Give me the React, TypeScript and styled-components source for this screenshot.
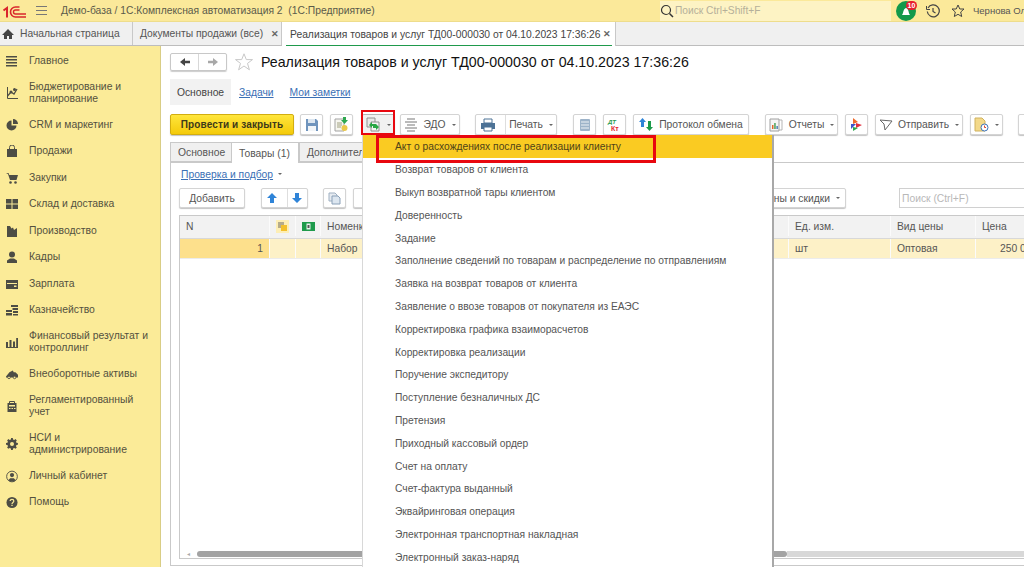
import { ReactNode } from "react"
import styled, { createGlobalStyle } from "styled-components"

const GlobalStyle = createGlobalStyle`
    html, body {
        margin: 0;
        padding: 0;
        background: #fff;
        overflow: hidden;
    }
    * { box-sizing: border-box; }
`

const Page = styled.div`
    position: relative;
    width: 1024px;
    height: 567px;
    overflow: hidden;
    display: flex;
    flex-direction: column;
    font-family: "Liberation Sans", Arial, sans-serif;
    font-size: 10.3px;
    color: #4b4b4b;
`

/* top bar */
const TitleBar = styled.div`
    height: 22px;
    flex: none;
    display: flex;
    align-items: center;
    background: #fbe99a;
    border-bottom: 1px solid #eedd8c;
`

const Logo = styled.div`
    width: 30px;
    height: 18px;
    flex: none;
    display: flex;
`

const Burger = styled.div`
    width: 11px;
    height: 9px;
    margin-left: 6px;
    border-top: 1px solid #777;
    border-bottom: 1px solid #777;
    position: relative;
    &::after {
        content: "";
        position: absolute;
        left: 0;
        right: 0;
        top: 3px;
        height: 1px;
        background: #777;
    }
`

const AppTitle = styled.div`
    margin-left: 14px;
    flex: 1;
    color: #5a5a4a;
    white-space: pre;
`

const GlobalSearch = styled.div`
    width: 231px;
    height: 20px;
    background: #fdf3c4;
    display: flex;
    align-items: center;
    color: #b5b09a;
    font-size: 10.2px;
    gap: 1px;
    padding-left: 0;
`

const BellWrap = styled.div`
    position: relative;
    width: 20px;
    height: 20px;
    margin-left: 5px;
`

const BellBadge = styled.div`
    position: absolute;
    top: 0;
    right: -1px;
    width: 11px;
    height: 9px;
    border-radius: 5px;
    background: #e8212c;
    color: #fff;
    font-size: 7px;
    font-weight: bold;
    line-height: 9px;
    text-align: center;
`

const TopIcon = styled.div<{ $gap: number }>`
    width: 14px;
    height: 14px;
    display: flex;
    margin-left: ${props => props.$gap}px;
`

const UserName = styled.div`
    margin-left: 8px;
    font-size: 9.5px;
    color: #555;
    white-space: nowrap;
    width: 51px;
    overflow: hidden;
`

/* open windows */
const TabBar = styled.div`
    height: 24px;
    flex: none;
    display: flex;
    background: #f0f0f0;
    border-bottom: 1px solid #bdbdbd;
`

const HomeTab = styled.div`
    width: 133px;
    display: flex;
    align-items: center;
    gap: 6px;
    padding-left: 2px;
    border-right: 1px solid #c8c8c8;
    color: #555;
    white-space: nowrap;
`

const OpenTab = styled.div`
    width: 149px;
    display: flex;
    align-items: center;
    padding-left: 7px;
    gap: 8px;
    border-right: 1px solid #c8c8c8;
    color: #555;
    white-space: nowrap;
`

const ActiveOpenTab = styled.div`
    width: 334px;
    height: 24px;
    background: #fff;
    display: flex;
    align-items: center;
    justify-content: space-between;
    padding: 0 4px 0 8px;
    border-right: 1px solid #c8c8c8;
    color: #444;
    position: relative;
    white-space: nowrap;
    &::after {
        content: "";
        position: absolute;
        left: 4px;
        right: 3px;
        bottom: 0;
        height: 1px;
        background: #1f9a4c;
    }
`

const CloseMark = styled.span`
    font-size: 9px;
    font-weight: bold;
    color: #666;
`

const Body = styled.div`
    flex: 1;
    display: flex;
    min-height: 0;
`

/* sections panel */
const Sidebar = styled.div`
    width: 161px;
    flex: none;
    background: #fbeb98;
    border-right: 1px solid #d9cd85;
    padding-top: 1.6px;
`

const SideItem = styled.div<{ $tall?: boolean }>`
    display: flex;
    align-items: center;
    min-height: ${props => props.$tall ? "37.5px" : "26.5px"};
    padding-left: 6px;
    gap: 11px;
    color: #54513f;
    line-height: 12px;
    font-size: 10.4px;
`

const SideIcon = styled.div`
    width: 12px;
    height: 12px;
    flex: none;
    display: flex;
`

/* form */
const Form = styled.div`
    flex: 1;
    min-width: 0;
    padding: 6px 0 0 9px;
    display: flex;
    flex-direction: column;
    background: #fff;
`

const HeadRow = styled.div`
    display: flex;
    align-items: center;
    height: 20px;
`

const NavGroup = styled.div`
    width: 57px;
    height: 18px;
    display: flex;
    border: 1px solid #c8c8c8;
    border-radius: 2px;
    box-shadow: 0 1px 1px #ccc;
`

const NavCell = styled.div`
    flex: 1;
    display: flex;
    align-items: center;
    justify-content: center;
    & + & { border-left: 1px solid #d8d8d8; }
`

const StarWrap = styled.div`
    width: 18px;
    height: 18px;
    margin: 0 8px;
    display: flex;
`

const Title = styled.div`
    font-size: 14.2px;
    color: #111;
    white-space: nowrap;
`

const FormTabs = styled.div`
    display: flex;
    align-items: center;
    margin-top: 7px;
    height: 26px;
`

const FormTabActive = styled.div`
    width: 61px;
    height: 26px;
    background: #f2f2f2;
    display: flex;
    align-items: center;
    justify-content: center;
    color: #444;
    margin-right: 8px;
`

const LinkText = styled.span`
    color: #3a6fb5;
    text-decoration: underline;
    margin-right: 16px;
`

const Toolbar = styled.div`
    display: flex;
    align-items: center;
    height: 21px;
    margin-top: 9px;
    white-space: nowrap;
`

const Btn = styled.div<{ $w: number; $mr?: number }>`
    width: ${props => props.$w}px;
    margin-right: ${props => props.$mr ?? 7}px;
    flex: none;
    height: 21px;
    display: flex;
    align-items: center;
    justify-content: center;
    gap: 5px;
    background: #fff;
    border: 1px solid #d4d4d4;
    border-radius: 2px;
    box-shadow: 0 1px 1px #c4c4c4;
    color: #555;
`

const PressedBtn = styled(Btn)`
    background: #f1f1f1;
    border-top-color: #b4b4b4;
`

const PrimaryBtn = styled(Btn)`
    background: linear-gradient(#ffe63c, #f4ca0a);
    border-color: #d2ad10;
    color: #3d3a1a;
    font-weight: bold;
    font-size: 10px;
    letter-spacing: 0.12px;
`

const SplitCell = styled.div<{ $w?: number }>`
    height: 100%;
    display: flex;
    align-items: center;
    justify-content: center;
    gap: 5px;
    ${props => props.$w ? `width: ${props.$w}px;` : "flex: 1;"}
    & + & { border-left: 1px solid #dedede; }
`

const Caret = styled.span`
    width: 0;
    height: 0;
    border-left: 2px solid transparent;
    border-right: 2px solid transparent;
    border-top: 2px solid #666;
    margin-left: 1px;
`

const Panel = styled.div`
    margin-top: 7px;
    flex: 1;
    min-height: 0;
    display: flex;
    flex-direction: column;
`

const TabStrip = styled.div`
    display: flex;
    height: 21px;
    flex: none;
    border-bottom: 1px solid #c9c9c9;
`

const PageTab = styled.div<{ $w: number; $active?: boolean }>`
    width: ${props => props.$w}px;
    height: ${props => props.$active ? "21px" : "20px"};
    display: flex;
    align-items: center;
    padding-left: 7px;
    background: ${props => props.$active ? "#fff" : "#f0f0f0"};
    border: 1px solid #c9c9c9;
    border-bottom: ${props => props.$active ? "none" : "1px solid #c9c9c9"};
    border-left-width: ${props => props.$active ? "0" : "1px"};
    color: #555;
    white-space: nowrap;
`

const PanelBody = styled.div`
    flex: 1;
    min-height: 0;
    margin-bottom: 1px;
    border-left: 1px solid #c9c9c9;
    border-bottom: 1px solid #c9c9c9;
    padding: 0 0 6px 8px;
    display: flex;
    flex-direction: column;
`

const CheckRow = styled.div`
    height: 22px;
    display: flex;
    align-items: center;
    gap: 4px;
    padding-left: 2px;
    flex: none;
`

const CheckLink = styled.span`
    color: #3a6fb5;
    text-decoration: underline;
`

const TableBar = styled.div`
    display: flex;
    align-items: center;
    height: 20px;
    flex: none;
    margin-top: 3px;
`

const SmallBtn = styled(Btn)`
    height: 20px;
`

const PriceBtn = styled(SmallBtn)`
    justify-content: flex-end;
    padding-right: 5px;
`

const SearchBox = styled.div`
    width: 125px;
    height: 20px;
    margin-left: 53px;
    flex: none;
    border: 1px solid #d0d0d0;
    border-right: none;
    color: #b8b8b8;
    display: flex;
    align-items: center;
    padding-left: 2px;
`

const GridBox = styled.div`
    margin-top: 7px;
    flex: 1;
    min-height: 0;
    border: 1px solid #c9c9c9;
    border-right: none;
    display: flex;
    flex-direction: column;
`

const GridRow = styled.div<{ $h: number; $head?: boolean }>`
    height: ${props => props.$h}px;
    flex: none;
    display: flex;
    padding-bottom: ${props => props.$head ? "2px" : "0"};
    background: ${props => props.$head ? "#f2f2f2" : "#fdf1c7"};
    border-bottom: 1px solid ${props => props.$head ? "#d8d8d8" : "#ececec"};
`

const GridCell = styled.div<{ $w: number; $right?: boolean; $accent?: boolean }>`
    width: ${props => props.$w}px;
    flex: none;
    display: flex;
    align-items: center;
    justify-content: ${props => props.$right ? "flex-end" : "flex-start"};
    padding: 0 6px;
    border-right: 1px solid #fbfbfb;
    background: ${props => props.$accent ? "#fde08c" : "transparent"};
    color: #555;
    white-space: nowrap;
`

const IconCell = styled(GridCell)`
    justify-content: center;
    padding: 0;
`

const PriceCell = styled(GridCell)`
    padding-left: 24px;
    overflow: hidden;
`

const GridFill = styled.div`
    flex: 1;
`

const ScrollRow = styled.div`
    height: 7px;
    flex: none;
    display: flex;
    align-items: center;
    margin-bottom: 1px;
    padding-left: 7px;
`

const ScrollArrow = styled.span`
    width: 10px;
    color: #aaa;
    font-size: 6px;
`

const ScrollThumb = styled.div`
    width: 590px;
    height: 6px;
    flex: none;
    background: #a3a3a3;
    border-radius: 3px;
`

const ScrollTrack = styled.div`
    flex: 1;
    height: 6px;
    background: #d8d8d8;
`

/* popup menu and annotation */
const Menu = styled.div`
    position: absolute;
    left: 362px;
    top: 135px;
    width: 412px;
    height: 432px;
    background: #fff;
    border-left: 1px solid #d8d8d8;
    border-right: 2px solid #a8a8a8;
`

const MenuItem = styled.div<{ $active?: boolean }>`
    height: 22.8px;
    display: flex;
    align-items: center;
    padding: 1px 0 0 32px;
    background: ${props => props.$active ? "#facb22" : "transparent"};
    color: ${props => props.$active ? "#4f4318" : "#555"};
    white-space: nowrap;
    font-size: 10.25px;
`

const RedFrame = styled.div<{ $x: number; $y: number; $w: number; $h: number; $t: number }>`
    position: absolute;
    left: ${props => props.$x}px;
    top: ${props => props.$y}px;
    width: ${props => props.$w}px;
    height: ${props => props.$h}px;
    border: ${props => props.$t}px solid #e8070f;
    pointer-events: none;
`

/* drawings */
const Svg = ({ size = 12, w, h, children }: { size?: number, w?: number, h?: number, children: ReactNode }) =>
    <svg width={w ?? size} height={h ?? size} viewBox={`0 0 ${w ?? size} ${h ?? size}`}>{children}</svg>

const ic = "#4d4d45"

const sideIcons: Record<string, ReactNode> = {
    main: <Svg><path d="M0 1h11v1.6H0zM0 4h11v1.6H0zM0 7h11v1.6H0zM0 10h11v1.6H0z" fill={ic} /></Svg>,
    budget: <Svg><path d="M1.500 0v11.500H12" fill="none" stroke={ic} /><path d="M1.500 9 5 5l3 2 3-5" fill="none" stroke={ic} strokeWidth="1.300" /><circle cx="5" cy="5" r="1.500" fill={ic} /><circle cx="8.500" cy="2.500" r="1.500" fill={ic} /></Svg>,
    crm: <Svg><path d="M5.500 1.500a5 5 0 1 0 5 5h-5z" fill={ic} /><path d="M7 0a5 5 0 0 1 5 5H7z" fill={ic} /></Svg>,
    sales: <Svg><path d="M1 4h10v8H1z" fill={ic} /><path d="M3.500 4V2.500a2.500 2.500 0 0 1 5 0V4" fill="none" stroke={ic} /></Svg>,
    buy: <Svg><path d="M0 1h2.500l.8 2H12l-1.500 5H4L2 2" fill={ic} /><circle cx="4.500" cy="10.500" r="1.300" fill={ic} /><circle cx="9.500" cy="10.500" r="1.300" fill={ic} /></Svg>,
    store: <Svg><path d="M0 1h5.500v4.500H0zM6.500 1H12v4.500H6.500zM0 6.500h5.500V11H0zM6.500 6.500H12V11H6.500z" fill={ic} /></Svg>,
    prod: <Svg><path d="M1 1h3l1.500 2.500L7 2.500 8 5l3-2v9H1z" fill={ic} /></Svg>,
    staff: <Svg><circle cx="6" cy="3.500" r="3" fill={ic} /><path d="M1 12V9.500L4 7.500h4l3 2V12z" fill={ic} /></Svg>,
    salary: <Svg><path d="M0 2h12v9H0z" fill={ic} /><path d="M1 5h10v1H1zM8 7.500h2.500v1.500H8z" fill="#fbeb98" /></Svg>,
    treasury: <Svg><path d="M0 6h6v2H0zM0 9h6v2.500H0zM5 1h7v2H5zM6.500 4H12v2H6.500zM7 7h5v2H7zM7 10h5v1.500H7z" fill={ic} /></Svg>,
    finance: <Svg><path d="M0 6h2v5H0zM3.500 4H5.500v7H3.500zM7 5.500h2V11H7zM10.200 2h1.800v9h-1.800z" fill={ic} /><path d="M0 11h12v1H0z" fill={ic} /></Svg>,
    assets: <Svg w={14} h={12}><path d="M0 9 4 4l4-2 1 2h2l3 3v3H0z" fill={ic} /><circle cx="3.500" cy="10" r="1.500" fill="#fbeb98" stroke={ic} /><circle cx="10" cy="10" r="1.500" fill="#fbeb98" stroke={ic} /></Svg>,
    reg: <Svg><path d="M1.500 3h9v9h-9z" fill={ic} /><path d="M3.500 3V1.500h5V3" fill="none" stroke={ic} /><path d="M3 5h6v1.500H3zM3 8h1.500v1H3zM5.500 8H7v1H5.500zM8 8h1.500v1H8z" fill="#fbeb98" /></Svg>,
    nsi: <Svg><path d="M5 0h2l.3 1.700 1.400.6L10.200 1.300 11.700 2.800 10.700 4.300l.6 1.400L13 6v2l-1.700.3-.6 1.400 1 1.500-1.500 1.500-1.500-1-1.400.6L7 14H5l-.3-1.700-1.400-.6-1.500 1L.3 11.200l1-1.500-.6-1.400L-1 8V6l1.700-.3.6-1.400-1-1.500L1.800 1.300l1.500 1 1.400-.6z" transform="scale(.85) translate(1 0)" fill={ic} /><circle cx="6" cy="6" r="2" fill="#fbeb98" /></Svg>,
    cabinet: <Svg w={13} h={13}><circle cx="6.500" cy="6.500" r="5.800" fill="none" stroke={ic} /><circle cx="6.500" cy="5" r="2.300" fill={ic} /><path d="M2.500 10.500 4.500 8.500h4l2 2-2 1.500h-4z" fill={ic} /></Svg>,
    help: <Svg w={13} h={13}><circle cx="6.500" cy="6.500" r="6" fill={ic} /><path d="M4.500 5c0-2.500 4-2.500 4 0 0 1.500-2 1.500-2 3" fill="none" stroke="#fbeb98" strokeWidth="1.300" /><path d="M5.800 9h1.400v1.400H5.800z" fill="#fbeb98" /></Svg>,
}

const sections: { icon: string, label: ReactNode, tall?: boolean }[] = [
    { icon: "main", label: "Главное" },
    { icon: "budget", label: <>Бюджетирование и<br />планирование</>, tall: true },
    { icon: "crm", label: "CRM и маркетинг" },
    { icon: "sales", label: "Продажи" },
    { icon: "buy", label: "Закупки" },
    { icon: "store", label: "Склад и доставка" },
    { icon: "prod", label: "Производство" },
    { icon: "staff", label: "Кадры" },
    { icon: "salary", label: "Зарплата" },
    { icon: "treasury", label: "Казначейство" },
    { icon: "finance", label: <>Финансовый результат и<br />контроллинг</>, tall: true },
    { icon: "assets", label: "Внеоборотные активы" },
    { icon: "reg", label: <>Регламентированный<br />учет</>, tall: true },
    { icon: "nsi", label: <>НСИ и<br />администрирование</>, tall: true },
    { icon: "cabinet", label: "Личный кабинет" },
    { icon: "help", label: "Помощь" },
]

const menuItems = [
    "Акт о расхождениях после реализации клиенту",
    "Возврат товаров от клиента",
    "Выкуп возвратной тары клиентом",
    "Доверенность",
    "Задание",
    "Заполнение сведений по товарам и распределение по отправлениям",
    "Заявка на возврат товаров от клиента",
    "Заявление о ввозе товаров от покупателя из ЕАЭС",
    "Корректировка графика взаиморасчетов",
    "Корректировка реализации",
    "Поручение экспедитору",
    "Поступление безналичных ДС",
    "Претензия",
    "Приходный кассовый ордер",
    "Счет на оплату",
    "Счет-фактура выданный",
    "Эквайринговая операция",
    "Электронная транспортная накладная",
    "Электронный заказ-наряд",
]

const GreenArrows = () =>
    <Svg size={15}>
        <path d="M1 1h8v9H1z" fill="#e8e8e8" stroke="#909090" />
        <path d="M5 5h8v9H5z" fill="#f3f3f3" stroke="#909090" />
        <path d="M3 8l3-3v2h4v2H6v2zM13 10l-3 3v-2H7V9h3V7z" fill="#28a745" />
    </Svg>

const App = () => {
    return (
        <Page>
            <GlobalStyle />
            <TitleBar>
                <Logo>
                    <svg width="30" height="18" viewBox="0 0 30 18" role="img" aria-label="1С">
                        <path d="M3.500 8.500 7 6v9.500" fill="none" stroke="#d9262c" strokeWidth="2" />
                        <path d="M26 15H15.500a5 5 0 0 1 0-10h4" fill="none" stroke="#d9262c" strokeWidth="1.600" />
                        <path d="M26 12H15.500a2 2 0 0 1 0-4h4" fill="none" stroke="#d9262c" strokeWidth="1.400" />
                    </svg>
                </Logo>
                <Burger />
                <AppTitle>Демо-база / 1С:Комплексная автоматизация 2  (1С:Предприятие)</AppTitle>
                <GlobalSearch>
                    <Svg size={14}>
                        <circle cx="6" cy="6" r="4.500" fill="none" stroke="#333" strokeWidth="1.200" />
                        <path d="M9.500 9.500 13 13" stroke="#333" strokeWidth="1.500" />
                    </Svg>
                    Поиск Ctrl+Shift+F
                </GlobalSearch>
                <BellWrap>
                    <Svg size={20}>
                        <circle cx="10" cy="10" r="10" fill="#12994a" />
                        <path d="M6 14c1.500-1.500 1-6 4-7 3 1 2.500 5.500 4 7z" fill="#fff" />
                    </Svg>
                    <BellBadge>10</BellBadge>
                </BellWrap>
                <TopIcon $gap={10}>
                    <Svg size={14}>
                        <path d="M2 4a6 6 0 1 1-.7 3.500" fill="none" stroke="#444" strokeWidth="1.200" />
                        <path d="M.5 2v3.500H4" fill="none" stroke="#444" />
                        <path d="M7 4v3.500l2.500 1.500" fill="none" stroke="#444" strokeWidth="1.200" />
                    </Svg>
                </TopIcon>
                <TopIcon $gap={11}>
                    <Svg size={14}>
                        <path d="M7 1l1.800 4H13l-3.300 3 1 4.500L7 10.300 3.300 12.500l1-4.500L1 5h4.200z" fill="none" stroke="#444" />
                    </Svg>
                </TopIcon>
                <UserName>Чернова Ольга</UserName>
            </TitleBar>
            <TabBar>
                <HomeTab>
                    <Svg size={12}>
                        <path d="M6 1 0 7h2v4h3V8h2v3h3V7h2z" fill="#444" />
                    </Svg>
                    <span>Начальная страница</span>
                </HomeTab>
                <OpenTab>
                    <span>Документы продажи (все)</span>
                    <CloseMark>✕</CloseMark>
                </OpenTab>
                <ActiveOpenTab>
                    <span>Реализация товаров и услуг ТД00-000030 от 04.10.2023 17:36:26</span>
                    <CloseMark>✕</CloseMark>
                </ActiveOpenTab>
            </TabBar>
            <Body>
                <Sidebar>
                    {sections.map(s =>
                        <SideItem key={s.icon} $tall={s.tall}>
                            <SideIcon>{sideIcons[s.icon]}</SideIcon>
                            <span>{s.label}</span>
                        </SideItem>
                    )}
                </Sidebar>
                <Form>
                    <HeadRow>
                        <NavGroup>
                            <NavCell>
                                <Svg size={12}><path d="M1 6l5-4v2.800h5v2.400H6V10z" fill="#444" /></Svg>
                            </NavCell>
                            <NavCell>
                                <Svg size={12}><path d="M11 6 6 2v2.800H1v2.400h5V10z" fill="#a8a8a8" /></Svg>
                            </NavCell>
                        </NavGroup>
                        <StarWrap>
                            <Svg size={18}>
                                <path d="M9 .8l2.300 5.800h6.200l-5 3.800 1.900 6.400-5.400-3.800-5.400 3.800 1.900-6.400-5-3.800h6.200z" fill="none" stroke="#c8c8c8" />
                            </Svg>
                        </StarWrap>
                        <Title>Реализация товаров и услуг ТД00-000030 от 04.10.2023 17:36:26</Title>
                    </HeadRow>
                    <FormTabs>
                        <FormTabActive>Основное</FormTabActive>
                        <LinkText>Задачи</LinkText>
                        <LinkText>Мои заметки</LinkText>
                    </FormTabs>
                    <Toolbar>
                        <PrimaryBtn $w={124} $mr={6}>Провести и закрыть</PrimaryBtn>
                        <Btn $w={23}>
                            <Svg size={14}>
                                <path d="M1 1h10l2 2v10H1z" fill="#6f94bd" />
                                <path d="M3 1h7v4H3z" fill="#dce6f0" />
                                <path d="M3 8h8v5H3z" fill="#f2f5f8" />
                            </Svg>
                        </Btn>
                        <Btn $w={23} $mr={9}>
                            <Svg size={15}>
                                <path d="M1 2h9v12H1z" fill="#f6f6f0" stroke="#a3a3a3" />
                                <path d="M3 6h5M3 8h5M3 10h4" stroke="#a0a080" />
                                <path d="M7 3h2V0h3v3h2l-3.500 4z" fill="#2ea84f" />
                                <circle cx="10.500" cy="11" r="3" fill="#ecc94a" />
                            </Svg>
                        </Btn>
                        <PressedBtn $w={33} $mr={5}>
                            <GreenArrows />
                            <Caret />
                        </PressedBtn>
                        <Btn $w={60} $mr={15}>
                            <Svg size={14}>
                                <path d="M3 1h8M1 4h12M3 7h8M1 10h12M3 13h8" stroke="#a5a5a5" strokeWidth="1.500" />
                            </Svg>
                            ЭДО
                            <Caret />
                        </Btn>
                        <Btn $w={82} $mr={16}>
                            <SplitCell $w={24}>
                                <Svg size={14}>
                                    <path d="M3 1h8v4H3z" fill="#fff" stroke="#4d7296" />
                                    <path d="M0 5h14v6H0z" fill="#4d7296" />
                                    <path d="M3 9h8v4H3z" fill="#fff" stroke="#4d7296" />
                                </Svg>
                            </SplitCell>
                            <SplitCell>Печать<Caret /></SplitCell>
                        </Btn>
                        <Btn $w={23}>
                            <Svg size={14}>
                                <rect x="2" y="1" width="10" height="12" rx="1" fill="#9db3c9" />
                                <path d="M3 4h8M3 7h8M3 10h8" stroke="#eef2f6" />
                            </Svg>
                        </Btn>
                        <Btn $w={23}>
                            <Svg w={15} h={14}>
                                <text x="1" y="6" fontSize="6" fontWeight="bold" fontStyle="italic" fill="#2a9a4d">ДТ</text>
                                <text x="4" y="13" fontSize="7" fontWeight="bold" fill="#e2262c">Кт</text>
                            </Svg>
                        </Btn>
                        <Btn $w={116} $mr={16}>
                            <Svg size={15}>
                                <path d="M3.500 1 7 5H5v5H2V5H0z" fill="#2f84d8" />
                                <path d="M10.500 14 7 10h2V4h3v6h2z" fill="#1c9a4a" />
                            </Svg>
                            Протокол обмена
                        </Btn>
                        <Btn $w={73}>
                            <Svg size={15}>
                                <path d="M1 2h9v12H1z" fill="#f4f4f4" stroke="#a0a0a0" />
                                <path d="M10 3h3v10h-3" fill="none" stroke="#b5b5b5" />
                                <path d="M3 8h1.500v4H3z" fill="#e2662c" />
                                <path d="M5.200 6h1.500v6H5.200z" fill="#4aa35a" />
                                <path d="M7.400 9h1.500v3H7.400z" fill="#4d7fb8" />
                            </Svg>
                            Отчеты
                            <Caret />
                        </Btn>
                        <Btn $w={23}>
                            <Svg size={13}>
                                <path d="M3 0l5 4-5 2z" fill="#ef6a2a" />
                                <path d="M1 6h5l-5 5z" fill="#3f55c8" />
                                <path d="M6 5l6 2-6 3z" fill="#e2303f" />
                                <path d="M3 9l5 1-5 3z" fill="#2ea84f" />
                            </Svg>
                        </Btn>
                        <Btn $w={88}>
                            <Svg size={14}>
                                <path d="M1 2l12 1-7 9-1-6z" fill="none" stroke="#666" />
                            </Svg>
                            Отправить
                            <Caret />
                        </Btn>
                        <Btn $w={33} $mr={15}>
                            <Svg size={15}>
                                <path d="M1 1h7l3 3v10H1z" fill="#f3d98a" stroke="#d0b25e" />
                                <circle cx="10.500" cy="10.500" r="3.500" fill="#fff" stroke="#3f74b8" />
                                <path d="M10.500 8.500v2h1.500" stroke="#d9442f" fill="none" />
                            </Svg>
                            <Caret />
                        </Btn>
                        <Btn $w={20} $mr={0} />
                    </Toolbar>
                    <Panel>
                        <TabStrip>
                            <PageTab $w={62}>Основное</PageTab>
                            <PageTab $w={67} $active>Товары (1)</PageTab>
                            <PageTab $w={90}>Дополнительно</PageTab>
                        </TabStrip>
                        <PanelBody>
                            <CheckRow>
                                <CheckLink>Проверка и подбор</CheckLink>
                                <Caret />
                            </CheckRow>
                            <TableBar>
                                <SmallBtn $w={66} $mr={16}>Добавить</SmallBtn>
                                <SmallBtn $w={47} $mr={15}>
                                    <SplitCell>
                                        <Svg size={12}><path d="M6 1l5 5H8v5H4V6H1z" fill="#2f84d8" /></Svg>
                                    </SplitCell>
                                    <SplitCell>
                                        <Svg size={12}><path d="M6 11 1 6h3V1h4v5h3z" fill="#2f84d8" /></Svg>
                                    </SplitCell>
                                </SmallBtn>
                                <SmallBtn $w={23}>
                                    <Svg size={13}>
                                        <path d="M1 1h6l2 2v6H1z" fill="#e6ebf1" stroke="#9fb0c2" />
                                        <path d="M4 4h6l2 2v6H4z" fill="#dce6f0" stroke="#8aa0b8" />
                                    </Svg>
                                </SmallBtn>
                                <SmallBtn $w={23} $mr={0} />
                                <GridFill />
                                <PriceBtn $w={120} $mr={0}>
                                    Цены и скидки
                                    <Caret />
                                </PriceBtn>
                                <SearchBox>Поиск (Ctrl+F)</SearchBox>
                            </TableBar>
                            <GridBox>
                                <GridRow $h={23} $head>
                                    <GridCell $w={90}>N</GridCell>
                                    <IconCell $w={26}>
                                        <Svg size={13}>
                                            <path d="M0 0h13v13H0z" fill="#fdeeb5" />
                                            <path d="M2 2h6v6H2z" fill="#b5ab8c" />
                                            <path d="M5 5h6v6H5z" fill="#f3c02c" />
                                        </Svg>
                                    </IconCell>
                                    <IconCell $w={25}>
                                        <Svg size={13}>
                                            <path d="M0 2h13v9H0z" fill="#1f9a4c" />
                                            <path d="M4.500 3.500h4v6h-4z" fill="#e8f5ec" />
                                            <path d="M5.500 5h2v3h-2z" fill="#555" />
                                        </Svg>
                                    </IconCell>
                                    <GridCell $w={468}>Номенклатура</GridCell>
                                    <GridCell $w={102}>Ед. изм.</GridCell>
                                    <GridCell $w={85}>Вид цены</GridCell>
                                    <GridCell $w={49}>Цена</GridCell>
                                </GridRow>
                                <GridRow $h={20}>
                                    <GridCell $w={90} $right $accent>1</GridCell>
                                    <GridCell $w={26} />
                                    <GridCell $w={25} />
                                    <GridCell $w={468}>Набор</GridCell>
                                    <GridCell $w={102}>шт</GridCell>
                                    <GridCell $w={85}>Оптовая</GridCell>
                                    <PriceCell $w={49}>250 000</PriceCell>
                                </GridRow>
                                <GridFill />
                                <ScrollRow>
                                    <ScrollArrow>◂</ScrollArrow>
                                    <ScrollThumb />
                                    <ScrollTrack />
                                </ScrollRow>
                            </GridBox>
                        </PanelBody>
                    </Panel>
                </Form>
            </Body>
            <Menu>
                {menuItems.map((m, i) =>
                    <MenuItem key={m} $active={i === 0}>{m}</MenuItem>
                )}
            </Menu>
            <RedFrame $x={361} $y={110} $w={34} $h={25} $t={2} />
            <RedFrame $x={376} $y={135} $w={280} $h={28} $t={3} />
        </Page>
    )
}

export default App
